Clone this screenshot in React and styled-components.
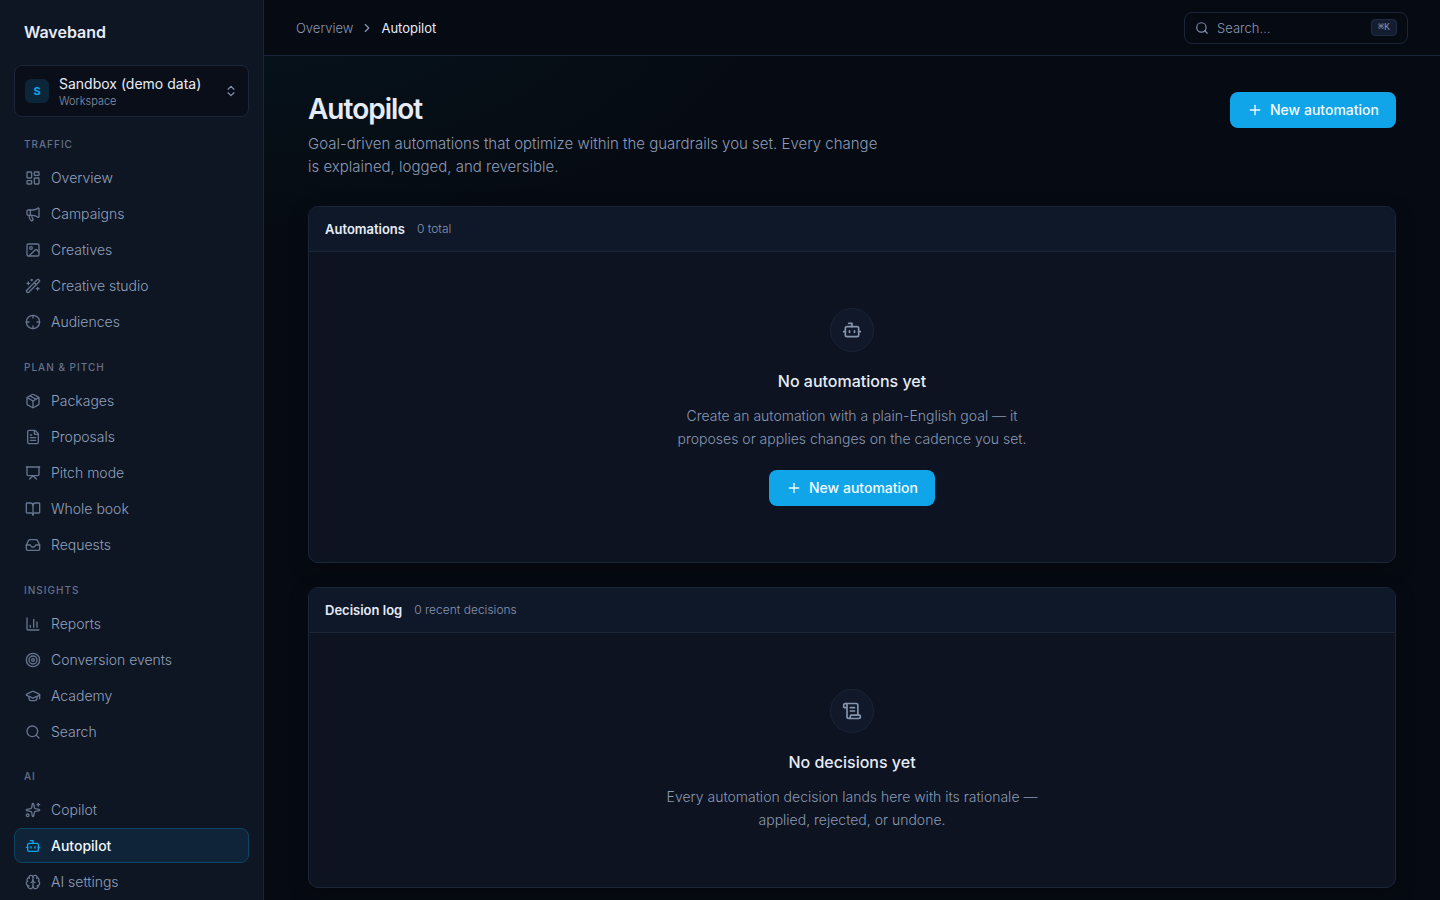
import React from "react";
import styled, { createGlobalStyle, css } from "styled-components";
import {
  BookOpen, Bot, Brain, ChartColumn, ChevronRight, ChevronsUpDown, Crosshair, FileText,
  GraduationCap, Image, Inbox, LayoutDashboard, Megaphone, Package, Plus, Presentation,
  ScrollText, Search, Sparkles, Target, WandSparkles,
} from "lucide-react";

const GlobalStyle = createGlobalStyle`
  *, *::before, *::after { box-sizing: border-box; }
  body {
    margin: 0;
    background: #060a12;
    color: #e6ecf7;
    font-family: Inter, "Liberation Sans", sans-serif;
    font-size: 14px;
    -webkit-font-smoothing: antialiased;
  }
  button, input { font: inherit; color: inherit; }
  h1, h2, h3, p { margin: 0; }
`;

const Shell = styled.div`
  display: grid;
  grid-template-columns: 264px minmax(0, 1fr);
  min-height: 100vh;
`;

const Sidebar = styled.aside`
  position: sticky;
  top: 0;
  height: 100vh;
  overflow: hidden;
  padding: 0 14px;
  background: #0e1523;
  border-right: 1px solid #1b2538;
`;

const Brand = styled.div`
  padding: 0 10px;
  line-height: 65px;
  font-size: 16px;
  font-weight: 600;
`;

const WorkspaceButton = styled.button`
  display: flex;
  align-items: center;
  gap: 10px;
  width: 100%;
  height: 52px;
  padding: 0 10px;
  text-align: left;
  background: #0a0e19;
  border: 1px solid #1b2639;
  border-radius: 8px;
  svg { color: #8695ae; }
`;

const WorkspaceMark = styled.span`
  display: grid;
  place-items: center;
  width: 24px;
  height: 24px;
  border-radius: 6px;
  background: #0c2639;
  color: #0ea5e9;
  font-size: 11px;
  font-weight: 700;
`;

const WorkspaceText = styled.span`
  display: flex;
  flex: 1;
  flex-direction: column;
  padding-top: 2px;
`;

const WorkspaceName = styled.span`
  font-size: 14px;
  line-height: 18px;
  font-weight: 400;
`;

const WorkspaceKind = styled.span`
  font-size: 11px;
  line-height: 16px;
  font-weight: 300;
  color: #8492ac;
`;

const NavGroup = styled.section`
  padding-top: 20px;
  & + &:not(:last-child) { padding-top: 21px; }
`;

const NavHeading = styled.h2`
  padding: 0 10px 8px;
  font-size: 10px;
  line-height: 15px;
  font-weight: 500;
  letter-spacing: 1px;
  text-transform: uppercase;
  color: #64728c;
`;

const NavList = styled.ul`
  display: grid;
  gap: 1px;
  margin: 0;
  padding: 0;
  list-style: none;
`;

const NavLink = styled.a`
  display: flex;
  align-items: center;
  gap: 10px;
  height: 35px;
  padding: 0 10px;
  border: 1px solid transparent;
  border-radius: 8px;
  color: #91a1bd;
  font-weight: 300;
  text-decoration: none;
  svg { color: #66758e; }
  ${({ $active }) => $active && css`
    background: #0f2438;
    border-color: #0d4364;
    color: #f1f5fb;
    font-weight: 500;
    svg { color: #0ea5e9; }
  `}
`;

const Content = styled.div`
  display: flex;
  flex-direction: column;
  min-width: 0;
  background: radial-gradient(ellipse 560px 260px at 0 0, #06131b, #060a12);
`;

const TopBar = styled.header`
  display: flex;
  align-items: center;
  justify-content: space-between;
  height: 56px;
  padding: 0 32px;
  background: #060a12;
  border-bottom: 1px solid #1b2539;
`;

const Breadcrumb = styled.nav`
  display: flex;
  align-items: center;
  gap: 7px;
  font-size: 13px;
  line-height: 18px;
  font-weight: 300;
  color: #8a99b4;
  a { color: inherit; text-decoration: none; }
`;

const Current = styled.span`
  color: #e6ecf7;
  font-weight: 400;
`;

const SearchField = styled.label`
  display: flex;
  align-items: center;
  gap: 8px;
  width: 224px;
  height: 32px;
  padding: 0 10px;
  border: 1px solid #1b2539;
  border-radius: 8px;
  color: #8090aa;
`;

const SearchInput = styled.input`
  flex: 1;
  min-width: 0;
  padding: 0;
  border: 0;
  outline: 0;
  background: transparent;
  font-size: 13px;
  font-weight: 300;
  &::placeholder { color: #8a99b4; opacity: 1; }
`;

const Shortcut = styled.kbd`
  width: 26px;
  height: 17px;
  border: 1px solid #202c44;
  border-radius: 4px;
  background: #141d30;
  font: 10px/15px "Liberation Mono", monospace;
  text-align: center;
`;

const Page = styled.main`
  display: grid;
  gap: 24px;
  padding: 36px 44px 12px;
`;

const PageHeader = styled.div`
  display: flex;
  align-items: flex-start;
  justify-content: space-between;
  padding-bottom: 4px;
`;

const PageTitle = styled.h1`
  font-size: 28px;
  line-height: 34px;
  font-weight: 600;
  letter-spacing: -1px;
`;

const Lead = styled.p`
  max-width: 576px;
  padding-top: 6px;
  font-size: 15px;
  line-height: 23px;
  font-weight: 300;
  color: #8c9bb7;
`;

const PrimaryButton = styled.button`
  display: inline-flex;
  align-items: center;
  justify-content: center;
  gap: 7px;
  width: 166px;
  height: 36px;
  padding: 0;
  border: 0;
  border-radius: 8px;
  background: #10a5e9;
  color: #f4fbff;
  line-height: 18px;
  font-weight: 500;
`;

const Card = styled.section`
  overflow: hidden;
  background: #0d1320;
  border: 1px solid #1b2639;
  border-radius: 10px;
  box-shadow: 0 6px 20px rgba(0, 0, 0, 0.25);
`;

const CardHeader = styled.header`
  display: flex;
  align-items: center;
  gap: 12px;
  height: 45px;
  padding: 0 16px;
  background: #0f1828;
  border-bottom: 1px solid #1b2639;
`;

const CardTitle = styled.h2`
  font-size: 13px;
  line-height: 18px;
  font-weight: 600;
`;

const CardCount = styled.span`
  font-size: 12px;
  line-height: 18px;
  font-weight: 300;
  color: #8796b1;
`;

const EmptyState = styled.div`
  display: flex;
  flex-direction: column;
  align-items: center;
  padding: 56px 24px;
  text-align: center;
`;

const EmptyIcon = styled.span`
  display: grid;
  place-items: center;
  width: 44px;
  height: 44px;
  border: 1px solid #1a2438;
  border-radius: 50%;
  background: #111829;
  color: #8695ae;
`;

const EmptyTitle = styled.h3`
  padding-top: 16px;
  font-size: 16px;
  line-height: 26px;
  font-weight: 500;
`;

const EmptyText = styled.p`
  max-width: 384px;
  padding: 10px 0 0;
  line-height: 23px;
  font-weight: 300;
  color: #8a99b4;
`;

const EmptyAction = styled.div`
  padding-top: 20px;
`;

const groups = [
  ["Traffic", [
    ["Overview", LayoutDashboard], ["Campaigns", Megaphone], ["Creatives", Image],
    ["Creative studio", WandSparkles], ["Audiences", Crosshair],
  ]],
  ["Plan & pitch", [
    ["Packages", Package], ["Proposals", FileText], ["Pitch mode", Presentation],
    ["Whole book", BookOpen], ["Requests", Inbox],
  ]],
  ["Insights", [
    ["Reports", ChartColumn], ["Conversion events", Target],
    ["Academy", GraduationCap], ["Search", Search],
  ]],
  ["AI", [["Copilot", Sparkles], ["Autopilot", Bot], ["AI settings", Brain]]],
];

function NewAutomation() {
  return (
    <PrimaryButton type="button">
      <Plus size={16} />
      New automation
    </PrimaryButton>
  );
}

function EmptyCard({ title, count, icon: Icon, heading, text, children }) {
  return (
    <Card>
      <CardHeader>
        <CardTitle>{title}</CardTitle>
        <CardCount>{count}</CardCount>
      </CardHeader>
      <EmptyState>
        <EmptyIcon><Icon size={20} /></EmptyIcon>
        <EmptyTitle>{heading}</EmptyTitle>
        <EmptyText>{text}</EmptyText>
        {children && <EmptyAction>{children}</EmptyAction>}
      </EmptyState>
    </Card>
  );
}

export default function App() {
  return (
    <>
      <GlobalStyle />
      <Shell>
        <Sidebar>
          <Brand>Waveband</Brand>
          <WorkspaceButton type="button">
            <WorkspaceMark>S</WorkspaceMark>
            <WorkspaceText>
              <WorkspaceName>Sandbox (demo data)</WorkspaceName>
              <WorkspaceKind>Workspace</WorkspaceKind>
            </WorkspaceText>
            <ChevronsUpDown size={14} />
          </WorkspaceButton>
          <nav aria-label="Main">
            {groups.map(([name, items]) => (
              <NavGroup key={name}>
                <NavHeading>{name}</NavHeading>
                <NavList>
                  {items.map(([label, Icon]) => (
                    <li key={label}>
                      <NavLink href="#" $active={label === "Autopilot"}>
                        <Icon size={16} />
                        {label}
                      </NavLink>
                    </li>
                  ))}
                </NavList>
              </NavGroup>
            ))}
          </nav>
        </Sidebar>
        <Content>
          <TopBar>
            <Breadcrumb aria-label="Breadcrumb">
              <a href="#">Overview</a>
              <ChevronRight size={14} />
              <Current aria-current="page">Autopilot</Current>
            </Breadcrumb>
            <SearchField>
              <Search size={14} />
              <SearchInput type="text" placeholder="Search…" aria-label="Search" />
              <Shortcut>⌘K</Shortcut>
            </SearchField>
          </TopBar>
          <Page>
            <PageHeader>
              <div>
                <PageTitle>Autopilot</PageTitle>
                <Lead>
                  Goal-driven automations that optimize within the guardrails you set. Every
                  change is explained, logged, and reversible.
                </Lead>
              </div>
              <NewAutomation />
            </PageHeader>
            <EmptyCard
              title="Automations"
              count="0 total"
              icon={Bot}
              heading="No automations yet"
              text="Create an automation with a plain-English goal — it proposes or applies changes on the cadence you set."
            >
              <NewAutomation />
            </EmptyCard>
            <EmptyCard
              title="Decision log"
              count="0 recent decisions"
              icon={ScrollText}
              heading="No decisions yet"
              text="Every automation decision lands here with its rationale — applied, rejected, or undone."
            />
          </Page>
        </Content>
      </Shell>
    </>
  );
}
